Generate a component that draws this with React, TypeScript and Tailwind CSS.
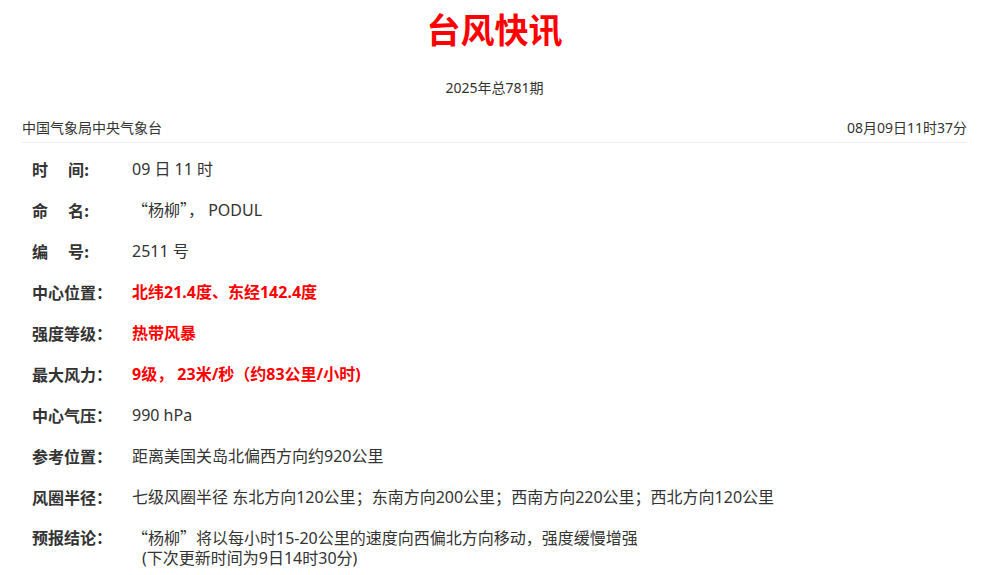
const font = "font-['Noto_Sans','Noto_Sans_CJK_SC',sans-serif]";
const cjk = "font-['Noto_Sans_CJK_SC',sans-serif]";

type Row = {
  label: React.ReactNode;
  value: React.ReactNode;
  red?: boolean;
};

const Q = ({ children }: { children: string }) => <span className={cjk}>{children}</span>;

const rows: Row[] = [
  {
    label: (
      <>
        <span>时</span>
        <span className="ml-[20px]">间</span>:
      </>
    ),
    value: "09 日 11 时",
  },
  {
    label: (
      <>
        <span>命</span>
        <span className="ml-[20px]">名</span>:
      </>
    ),
    value: (
      <>
        <Q>“杨柳”，</Q> PODUL
      </>
    ),
  },
  {
    label: (
      <>
        <span>编</span>
        <span className="ml-[20px]">号</span>:
      </>
    ),
    value: "2511 号",
  },
  { label: "中心位置：", value: "北纬21.4度、东经142.4度", red: true },
  { label: "强度等级：", value: "热带风暴", red: true },
  {
    label: "最大风力：",
    value: (
      <>
        9级<Q>，</Q> 23米/秒<Q>（</Q>约83公里/小时)
      </>
    ),
    red: true,
  },
  { label: "中心气压：", value: "990 hPa" },
  { label: "参考位置：", value: "距离美国关岛北偏西方向约920公里" },
  {
    label: "风圈半径：",
    value: (
      <>
        七级风圈半径 东北方向120公里<Q>；</Q>东南方向200公里<Q>；</Q>西南方向220公里<Q>；</Q>西北方向120公里
      </>
    ),
  },
];

export default function App() {
  return (
    <div className={`min-h-screen bg-white text-[#333] ${font}`}>
      <div className="ml-[22px] mr-[25px]">
        <h1 className="pt-[8px] text-center text-[34px] leading-[44px] font-bold text-[#ff0000]">
          台风快讯
        </h1>
        <p className="mt-[26px] text-center text-[14px] leading-[20px]">2025年总781期</p>
        <div className="mt-[20px] flex items-center justify-between border-b border-[#eeeeee] pb-[4px] text-[14px] leading-[20px]">
          <span>中国气象局中央气象台</span>
          <span>08月09日11时37分</span>
        </div>
        <ul className="mt-[5px] pl-[10px] text-[16px]">
          {rows.map((row, i) => (
            <li key={i} className="flex h-[41px] items-center">
              <span className={`w-[100px] shrink-0 font-bold ${cjk}`}>{row.label}</span>
              <span className={row.red ? "font-bold text-[#ff0000]" : ""}>{row.value}</span>
            </li>
          ))}
          <li className="flex pt-[10px] leading-[20px]">
            <span className={`w-[100px] shrink-0 font-bold ${cjk}`}>预报结论：</span>
            <div>
              <div>
                <Q>“杨柳”</Q>将以每小时15-20公里的速度向西偏北方向移动<Q>，</Q>强度缓慢增强
              </div>
              <div className="pl-[10px]">(下次更新时间为9日14时30分)</div>
            </div>
          </li>
        </ul>
      </div>
    </div>
  );
}
